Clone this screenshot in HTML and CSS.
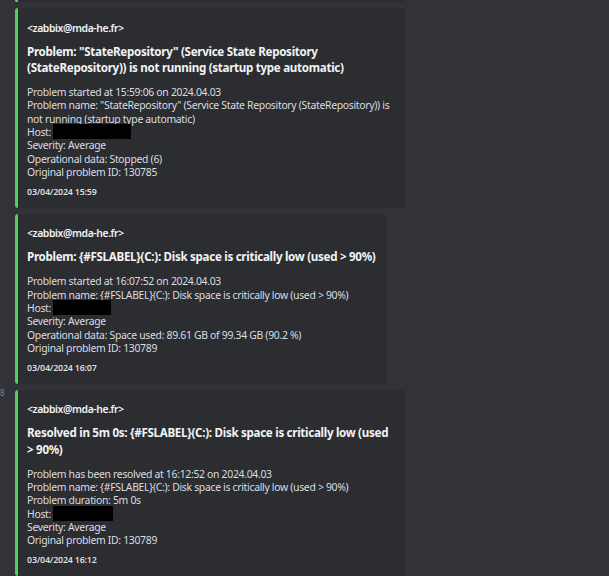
FILE: index.html
```html
<!DOCTYPE html>
<html lang="fr">
<head>
<meta charset="utf-8">
<title>Zabbix alerts</title>
<link rel="stylesheet" href="styles.css">
</head>
<body>
<main class="chat">
  <div class="msg">
    <div class="embed embed-tail"></div>
  </div>

  <div class="msg">
    <article class="embed">
      <div class="author">&lt;zabbix@mda-he.fr&gt;</div>
      <div class="title">Problem: "StateRepository" (Service State Repository (StateRepository)) is not running (startup type automatic)</div>
      <div class="desc">
        <div>Problem started at 15:59:06 on 2024.04.03</div>
        <div>Problem name: "StateRepository" (Service State Repository (StateRepository)) is not running (startup type automatic)</div>
        <div>Host: <span class="redact r1"></span></div>
        <div>Severity: Average</div>
        <div>Operational data: Stopped (6)</div>
        <div>Original problem ID: 130785</div>
      </div>
      <div class="footer">03/04/2024 15:59</div>
    </article>
  </div>

  <div class="msg">
    <article class="embed">
      <div class="author">&lt;zabbix@mda-he.fr&gt;</div>
      <div class="title">Problem: {#FSLABEL}(C:): Disk space is critically low (used &gt; 90%)</div>
      <div class="desc">
        <div>Problem started at 16:07:52 on 2024.04.03</div>
        <div>Problem name: {#FSLABEL}(C:): Disk space is critically low (used &gt; 90%)</div>
        <div>Host: <span class="redact r2"></span></div>
        <div>Severity: Average</div>
        <div>Operational data: Space used: 89.61 GB of 99.34 GB (90.2 %)</div>
        <div>Original problem ID: 130789</div>
      </div>
      <div class="footer">03/04/2024 16:07</div>
    </article>
  </div>

  <div class="msg">
    <span class="gutter-time">8</span>
    <article class="embed">
      <div class="author">&lt;zabbix@mda-he.fr&gt;</div>
      <div class="title">Resolved in 5m 0s: {#FSLABEL}(C:): Disk space is critically low (used &gt; 90%)</div>
      <div class="desc">
        <div>Problem has been resolved at 16:12:52 on 2024.04.03</div>
        <div>Problem name: {#FSLABEL}(C:): Disk space is critically low (used &gt; 90%)</div>
        <div>Problem duration: 5m 0s</div>
        <div>Host: <span class="redact r3"></span></div>
        <div>Severity: Average</div>
        <div>Original problem ID: 130789</div>
      </div>
      <div class="footer">03/04/2024 16:12</div>
    </article>
  </div>
</main>
</body>
</html>
```

FILE: styles.css
```css
html, body {
  margin: 0;
  padding: 0;
  background: #313338;
  overflow: hidden;
}

body {
  font-family: "Noto Sans", "Open Sans", sans-serif;
  color: #dbdee1;
  width: 609px;
  height: 576px;
}

.chat {
  display: flex;
  flex-direction: column;
  gap: 6px;
  padding-left: 15px;
}

.msg {
  position: relative;
}

.embed {
  box-sizing: border-box;
  width: fit-content;
  max-width: 390px;
  background: #2b2d31;
  border-left: 3px solid #4fcf5b;
  border-radius: 3px;
  padding: 6px 12px 10px 9px;
  display: flex;
  flex-direction: column;
}

.embed-tail {
  width: 389px;
  height: 3px;
  padding: 0;
  margin-top: -1px;
}

.author {
  margin-top: 6.5px;
  font-size: 10.4px;
  line-height: 14px;
  font-weight: 600;
  letter-spacing: -0.4px;
  color: #f2f3f5;
}

.title {
  margin-top: 9px;
  font-size: 11.6px;
  line-height: 16.5px;
  font-weight: 700;
  letter-spacing: -0.3px;
  color: #f2f3f5;
}

.desc {
  margin-top: 9.5px;
  font-size: 10.4px;
  line-height: 13.33px;
  letter-spacing: -0.3px;
  color: #dbdee1;
}

.footer {
  margin-top: 6.5px;
  font-size: 8.9px;
  line-height: 12px;
  font-weight: 600;
  letter-spacing: -0.2px;
  color: #dbdee1;
}

.redact {
  display: inline-block;
  vertical-align: top;
  background: #000;
  height: 15px;
  margin-top: -2px;
  margin-bottom: -2px;
  letter-spacing: 0;
}

.r1 { width: 78px; }
.r2 { width: 58px; }
.r3 { width: 60px; }

.gutter-time {
  position: absolute;
  left: -15px;
  top: -3px;
  font-size: 8px;
  line-height: 12px;
  color: #80848e;
}
```
